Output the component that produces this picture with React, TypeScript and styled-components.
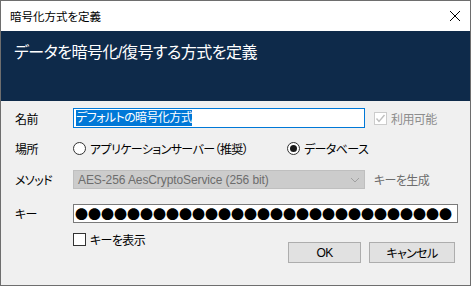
import styled, { createGlobalStyle } from "styled-components";

const GlobalStyle = createGlobalStyle`
	html, body {
		margin: 0;
		padding: 0;
		background: #f0f0f0;
	}
	* {
		box-sizing: border-box;
	}
`;

const Window = styled.div`
	width: 471px;
	height: 286px;
	border: 1px solid #6e6e6e;
	background: #f0f0f0;
	display: flex;
	flex-direction: column;
	font-family: "Liberation Sans", "Noto Sans CJK JP", sans-serif;
	font-feature-settings: "palt";
	font-size: 12px;
	letter-spacing: -0.6px;
	color: #000;
	overflow: hidden;
`;

const TitleBar = styled.div`
	height: 30px;
	background: #fff;
	display: flex;
	align-items: center;
	justify-content: space-between;
	padding: 0 9px 0 9px;
	font-size: 11.5px;
	letter-spacing: 0;
`;

const CloseButton = styled.div`
	width: 12px;
	height: 12px;
	display: flex;
`;

const Header = styled.div`
	height: 70px;
	background: #0e2a4a;
	color: #fff;
	padding: 11px 0 0 13px;
	font-size: 16px;
	letter-spacing: -0.5px;
	line-height: 22px;
`;

const Body = styled.div`
	flex: 1;
	padding: 7px 0 0 14px;
	display: grid;
	grid-template-columns: 49px 292px auto;
	grid-template-rows: 30px 32px 34px 29px 1fr;
	column-gap: 9px;
`;

const Label = styled.div<{ $h?: number }>`
	height: ${(p) => p.$h ?? 20}px;
	display: flex;
	align-items: center;
	white-space: nowrap;
`;

const TextBox = styled.div<{ $focused?: boolean }>`
	height: 20px;
	background: #fff;
	border: 1px solid ${(p) => (p.$focused ? "#0078d7" : "#7a7a7a")};
	display: flex;
	align-items: center;
	padding: 0 2px;
	overflow: hidden;
	white-space: nowrap;
`;

const Selected = styled.span`
	background: #0078d7;
	color: #fff;
	line-height: 16px;
`;

const Dots = styled.span`
	font-family: "Noto Sans CJK JP", sans-serif;
	font-feature-settings: normal;
	font-size: 13px;
	letter-spacing: 0;
	line-height: 16px;
	color: #000;
`;

const Check = styled.div<{ $disabled?: boolean }>`
	display: flex;
	align-items: center;
	gap: 4px;
	height: 20px;
	color: ${(p) => (p.$disabled ? "#8d8d8d" : "#000")};
	white-space: nowrap;
`;

const Box = styled.div<{ $disabled?: boolean }>`
	width: 13px;
	height: 13px;
	border: 1px solid ${(p) => (p.$disabled ? "#cccccc" : "#333")};
	background: #fff;
	display: flex;
	align-items: center;
	justify-content: center;
`;

const RadioRow = styled.div`
	display: flex;
	align-items: center;
	height: 20px;
	grid-column: 2 / 4;
`;

const Radio = styled.div<{ $width?: number }>`
	display: flex;
	align-items: center;
	gap: 4px;
	width: ${(p) => (p.$width ? `${p.$width}px` : "auto")};
	white-space: nowrap;
`;

const RadioCircle = styled.div<{ $checked?: boolean }>`
	width: 13px;
	height: 13px;
	border-radius: 50%;
	border: 1px solid #333;
	background: #fff;
	display: flex;
	align-items: center;
	justify-content: center;
	&::after {
		content: "";
		width: 7px;
		height: 7px;
		border-radius: 50%;
		background: ${(p) => (p.$checked ? "#1a1a1a" : "transparent")};
	}
`;

const Select = styled.div`
	height: 19px;
	background: #cccccc;
	border: 1px solid #bfbfbf;
	color: #6d6d6d;
	display: flex;
	align-items: center;
	justify-content: space-between;
	padding: 0 4px 0 4px;
	letter-spacing: -0.1px;
	white-space: nowrap;
`;

const GrayText = styled.div`
	color: #6d6d6d;
	height: 19px;
	display: flex;
	align-items: center;
	white-space: nowrap;
`;

const KeyBox = styled(TextBox)`
	grid-column: 2 / 4;
	width: 385px;
	height: 19px;
	border-color: #7a7a7a;
	padding-left: 1px;
`;

const Footer = styled.div`
	grid-column: 2 / 4;
	display: flex;
	justify-content: space-between;
	align-items: flex-start;
	width: 382px;
`;

const ShowKey = styled(Check)`
	height: 13px;
`;

const Buttons = styled.div`
	display: flex;
	gap: 8px;
	margin-top: 9px;
`;

const Button = styled.div<{ $width: number }>`
	width: ${(p) => p.$width}px;
	height: 21px;
	background: #e1e1e1;
	border: 1px solid #adadad;
	display: flex;
	align-items: center;
	justify-content: center;
`;

export default function App() {
	return (
		<>
			<GlobalStyle />
			<Window>
				<TitleBar>
					<span>暗号化方式を定義</span>
					<CloseButton>
						<svg width="12" height="12" viewBox="0 0 12 12">
							<path d="M1 1 L11 11 M11 1 L1 11" stroke="#000" strokeWidth="1" />
						</svg>
					</CloseButton>
				</TitleBar>
				<Header>データを暗号化/復号する方式を定義</Header>
				<Body>
					<Label>名前</Label>
					<TextBox $focused>
						<Selected>デフォルトの暗号化方式</Selected>
					</TextBox>
					<Check $disabled>
						<Box $disabled>
							<svg width="11" height="11" viewBox="0 0 11 11">
								<path d="M1.5 5.5 L4 8.5 L9.5 2" stroke="#bfbfbf" strokeWidth="1.4" fill="none" />
							</svg>
						</Box>
						利用可能
					</Check>

					<Label>場所</Label>
					<RadioRow>
						<Radio $width={214}>
							<RadioCircle />
							アプリケーションサーバー（推奨）
						</Radio>
						<Radio>
							<RadioCircle $checked />
							データベース
						</Radio>
					</RadioRow>

					<Label $h={19}>メソッド</Label>
					<Select>
						<span>AES-256 AesCryptoService (256 bit)</span>
						<svg width="10" height="6" viewBox="0 0 10 6">
							<path d="M1 1 L5 5 L9 1" stroke="#a0a0a0" strokeWidth="1" fill="none" />
						</svg>
					</Select>
					<GrayText>キーを生成</GrayText>

					<Label $h={19}>キー</Label>
					<KeyBox>
						<Dots>{"●".repeat(29)}</Dots>
					</KeyBox>

					<div />
					<Footer>
						<ShowKey>
							<Box />
							キーを表示
						</ShowKey>
						<Buttons>
							<Button $width={73}>OK</Button>
							<Button $width={86}>キャンセル</Button>
						</Buttons>
					</Footer>
				</Body>
			</Window>
		</>
	);
}
